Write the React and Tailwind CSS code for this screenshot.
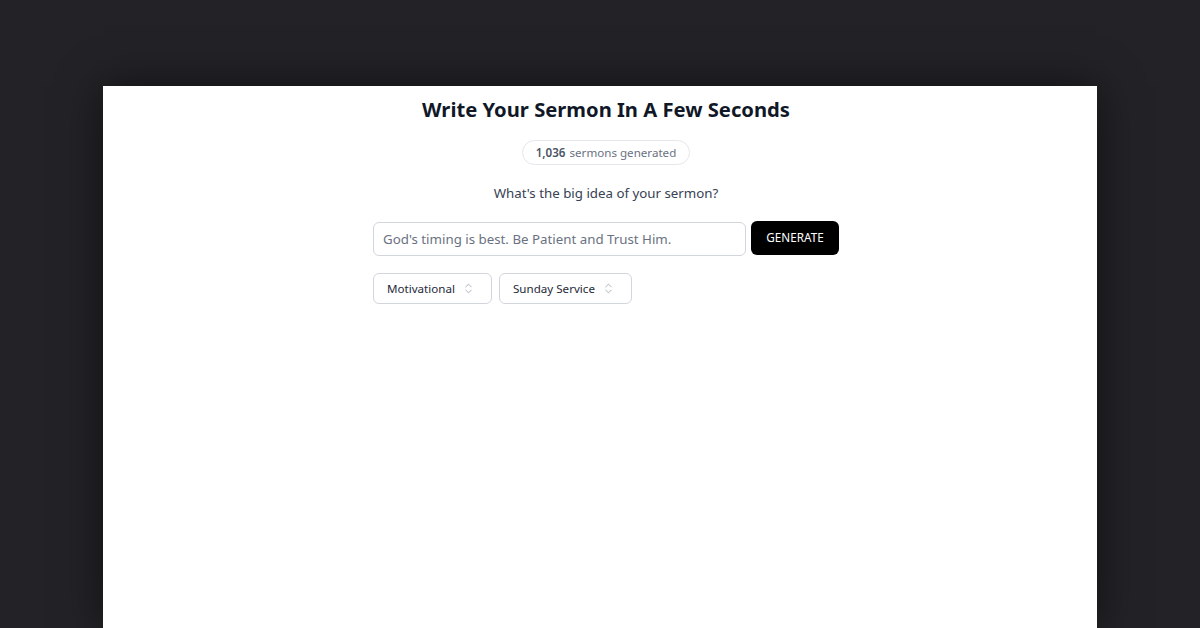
import React, { useState } from 'react';
import { ChevronsUpDown } from 'lucide-react';

const SelectBox = ({ label, width }) => (
  <button className={`h-[31px] flex items-center justify-between pl-[13px] pr-[16px] border border-gray-300 rounded-md bg-white text-[11.6px] text-gray-800 ${width}`}>
    <span>{label}</span>
    <ChevronsUpDown className="h-[13px] w-[13px] text-gray-400" strokeWidth={1.5} />
  </button>
);

const App = () => {
  const [idea, setIdea] = useState('');

  return (
    <div className="min-h-screen h-[628px] overflow-hidden bg-[#232226] flex justify-center pt-[86px]" style={{ fontFamily: '"Noto Sans", "Open Sans", sans-serif' }}>
      <div className="w-[994px] bg-white shadow-[0_0_40px_rgba(0,0,0,0.55)] pl-[12px]">
        <div className="w-[466px] mx-auto flex flex-col items-center">
          <h1 className="mt-[9px] text-[20.2px] leading-[28px] font-bold text-gray-900">Write Your Sermon In A Few Seconds</h1>

          <div className="mt-[17px] h-[25px] px-[13px] flex items-center border border-gray-200 rounded-full text-[11.6px] text-gray-500">
            <span className="font-semibold text-gray-600 mr-1">1,036</span> sermons generated
          </div>

          <p className="mt-[19px] text-[13.3px] text-gray-700">What's the big idea of your sermon?</p>

          <div className="mt-[18px] w-full flex items-center gap-[5px]">
            <input
              value={idea}
              onChange={(e) => setIdea(e.target.value)}
              placeholder="God's timing is best. Be Patient and Trust Him."
              className="w-[373px] h-[34px] px-[9px] border border-gray-300 rounded-md text-[13.3px] text-gray-800 placeholder:text-gray-500 outline-none"
            />
            <button className="w-[88px] h-[34px] bg-black text-white text-[11.7px] rounded-md -mt-[2px]">GENERATE</button>
          </div>

          <div className="mt-[17px] w-full flex gap-[7px]">
            <SelectBox label="Motivational" width="w-[119px]" />
            <SelectBox label="Sunday Service" width="w-[133px]" />
          </div>
        </div>
      </div>
    </div>
  );
};

export default App;
